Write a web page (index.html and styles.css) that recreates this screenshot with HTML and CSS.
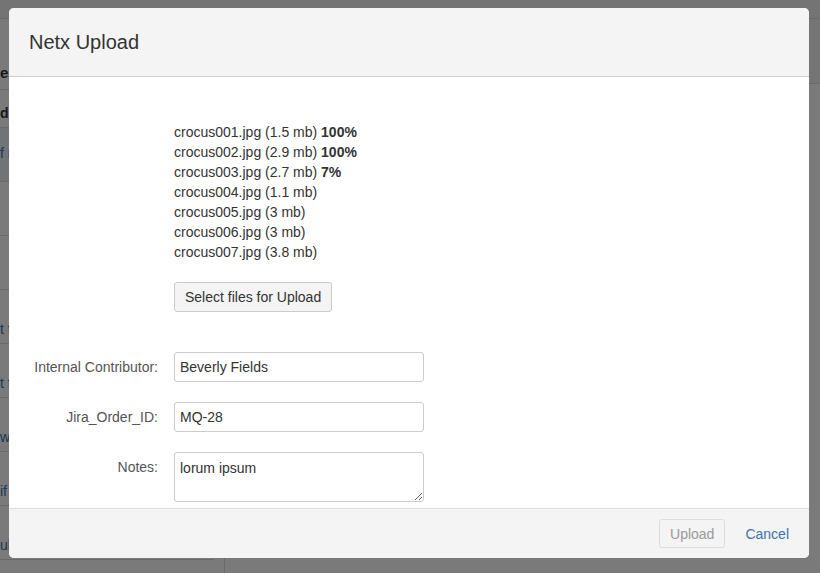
FILE: index.html
```html
<!DOCTYPE html>
<html lang="en">
<head>
    <meta charset="UTF-8">
    <meta name="viewport" content="width=device-width, initial-scale=1.0">
    <title>Netx Upload</title>
    <link rel="stylesheet" href="styles.css">
</head>
<body>
    <div class="page">
        <div class="topbar"></div>
        <div class="layout">
            <aside class="sidebar">
                <div class="side-item side-head"><b>er</b></div>
                <div class="side-item side-sub"><b>d</b></div>
                <div class="side-item side-active"><a>f re</a></div>
                <div class="side-item"></div>
                <div class="side-item"></div>
                <div class="side-item"><a>t th</a></div>
                <div class="side-item"><a>t th</a></div>
                <div class="side-item"><a>wo</a></div>
                <div class="side-item"><a>if</a></div>
                <div class="side-item"><a>uli</a></div>
            </aside>
            <div class="content">
                <div class="content-head"></div>
            </div>
        </div>
    </div>

    <div class="overlay">
        <section class="dialog">
            <header class="dialog-header">
                <h2>Netx Upload</h2>
            </header>

            <div class="dialog-body">
                <div class="row">
                    <div></div>
                    <ul class="files">
                        <li>crocus001.jpg (1.5 mb) <b>100%</b></li>
                        <li>crocus002.jpg (2.9 mb) <b>100%</b></li>
                        <li>crocus003.jpg (2.7 mb) <b>7%</b></li>
                        <li>crocus004.jpg (1.1 mb)</li>
                        <li>crocus005.jpg (3 mb)</li>
                        <li>crocus006.jpg (3 mb)</li>
                        <li>crocus007.jpg (3.8 mb)</li>
                    </ul>
                </div>
                <div class="row row-select">
                    <div></div>
                    <div><button class="btn-select">Select files for Upload</button></div>
                </div>
                <div class="row row-first">
                    <label for="contributor">Internal Contributor:</label>
                    <input id="contributor" class="text" type="text" value="Beverly Fields">
                </div>
                <div class="row row-field">
                    <label for="order">Jira_Order_ID:</label>
                    <input id="order" class="text" type="text" value="MQ-28">
                </div>
                <div class="row row-field">
                    <label for="notes">Notes:</label>
                    <textarea id="notes" class="textarea">lorum ipsum</textarea>
                </div>
            </div>

            <footer class="dialog-footer">
                <button class="btn-upload" disabled>Upload</button>
                <a class="cancel" href="#">Cancel</a>
            </footer>
        </section>
    </div>
</body>
</html>
```

FILE: styles.css
```css
body{
    margin: 0;
    font-family: "Liberation Sans", Arial, sans-serif;
    font-size: 14px;
    color: #333;
    background: #fff;
}
.page{
    height: 573px;
    overflow: hidden;
}
.topbar{
    height: 18px;
    background: #f2f2f2;
    border-bottom: 1px solid #ddd;
}
.layout{
    display: flex;
}
.sidebar{
    width: 224px;
    border-right: 1px solid #ddd;
    height: 560px;
}
.side-item{
    height: 54px;
    border-bottom: 1px solid #ddd;
    margin-right: 10px;
    padding-top: 30px;
    box-sizing: border-box;
    line-height: 18px;
    font-size: 14px;
}
.side-item a{
    color: #3b73af;
}
.side-head{
    height: 71px;
    padding-top: 45px;
    font-size: 15px;
}
.side-sub{
    height: 38px;
    padding-top: 14px;
}
.side-active{
    background: #ebf2f9;
    padding-top: 16px;
}
.content{
    flex: 1;
}
.content-head{
    height: 64px;
    background: #f5f5f5;
    border-bottom: 1px solid #ddd;
}

.overlay{
    position: fixed;
    top: 0;
    left: 0;
    right: 0;
    bottom: 0;
    background: rgba(0, 0, 0, 0.52);
    padding: 8px 0 0 9px;
}
.dialog{
    width: 800px;
    height: 550px;
    background: #fff;
    border-radius: 5px;
    overflow: hidden;
    display: flex;
    flex-direction: column;
}
.dialog-header{
    height: 68px;
    background: #f4f4f4;
    border-bottom: 1px solid #ccc;
    display: flex;
    align-items: center;
    padding: 0 20px;
}
.dialog-header h2{
    margin: 0;
    font-size: 20px;
    font-weight: normal;
    color: #333;
}
.dialog-body{
    flex: 1;
    overflow: hidden;
    padding: 45px 20px 0;
}
.row{
    display: grid;
    grid-template-columns: 129px 250px;
    column-gap: 16px;
}
.row label{
    text-align: right;
    line-height: 30px;
    color: #555;
}
.files{
    list-style: none;
    margin: 0;
    padding: 0;
    line-height: 20px;
}
.row-select{
    margin-top: 20px;
}
.row-first{
    margin-top: 40px;
}
.row-field{
    margin-top: 20px;
}
.btn-select{
    height: 30px;
    padding: 0 10px;
    font-family: inherit;
    font-size: 14px;
    color: #333;
    background: #f4f4f4;
    border: 1px solid #ccc;
    border-radius: 3px;
}
.text,
.textarea{
    box-sizing: border-box;
    width: 250px;
    border: 1px solid #ccc;
    border-radius: 3px;
    font-family: inherit;
    font-size: 14px;
    color: #333;
    margin: 0;
}
.text{
    height: 30px;
    padding: 0 5px;
}
.textarea{
    height: 50px;
    padding: 5px;
    line-height: 20px;
    resize: vertical;
}
.dialog-footer{
    height: 49px;
    background: #f4f4f4;
    border-top: 1px solid #ddd;
    display: flex;
    justify-content: flex-end;
    align-items: center;
    gap: 20px;
    padding-right: 20px;
}
.btn-upload{
    height: 29px;
    padding: 0 10px;
    font-family: inherit;
    font-size: 14px;
    color: #999;
    background: #f4f4f4;
    border: 1px solid #ddd;
    border-radius: 3px;
}
.cancel{
    color: #3b73af;
    text-decoration: none;
}
```
